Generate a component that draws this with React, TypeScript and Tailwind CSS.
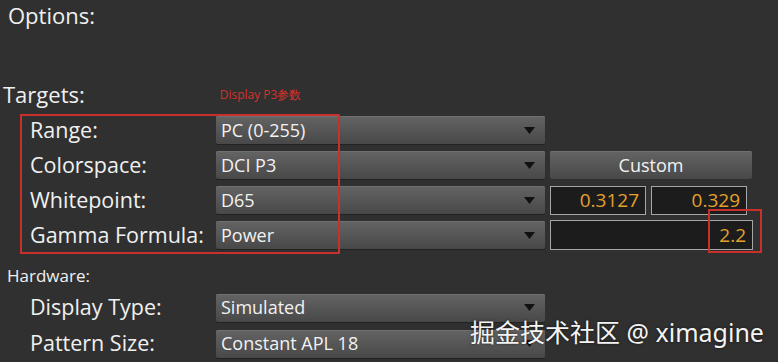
const Arrow = () => (
  <svg width="11" height="7" viewBox="0 0 11 7" aria-hidden="true">
    <polygon points="0,0 11,0 5.5,7" fill="#111" />
  </svg>
);

const Dropdown = ({ value }: { value: string }) => (
  <div className="h-[28px] w-[329px] flex items-center justify-between pl-[5px] pr-[10px] rounded-[2px] bg-gradient-to-b from-[#646464] to-[#484848] shadow-[inset_0_1px_0_#707070,0_1px_0_#222] text-[18px] text-[#f2f2f2]">
    <span>{value}</span>
    <Arrow />
  </div>
);

const NumBox = ({ value, className }: { value: string; className: string }) => (
  <div className={`h-[29px] flex items-center justify-end pr-[6px] bg-[#1c1c1c] border border-[#a6a6a6] text-[19px] text-[#e3a12c] ${className}`}>
    {value}
  </div>
);

const targets = [
  { label: 'Range:', value: 'PC (0-255)' },
  { label: 'Colorspace:', value: 'DCI P3' },
  { label: 'Whitepoint:', value: 'D65' },
  { label: 'Gamma Formula:', value: 'Power' },
];

export default function App() {
  return (
    <div className="relative w-[778px] h-[362px] overflow-hidden bg-[#303030] text-[#f0f0f0] font-['Open_Sans',sans-serif]">
      <div className="pl-[8px] text-[22px] leading-[30px]">Options:</div>

      <div className="mt-[49px] flex items-start">
        <div className="pl-[3px] text-[22px] leading-[30px]">Targets:</div>
        <div className="ml-[135px] mt-[8px] text-[12px] leading-[16px] text-[#d3322c]">Display P3参数</div>
      </div>

      <div className="mt-[7px] flex flex-col gap-[7px]">
        {targets.map((t, i) => (
          <div key={t.label} className="flex items-center h-[28px]">
            <div className="w-[216px] pl-[30px] text-[21.5px] leading-[28px]">{t.label}</div>
            <Dropdown value={t.value} />
            <div className="ml-[5px] flex gap-[5px]">
              {i === 1 && (
                <div className="w-[202px] h-[28px] flex items-center justify-center rounded-[2px] bg-gradient-to-b from-[#646464] to-[#484848] shadow-[inset_0_1px_0_#707070] text-[18px] text-[#f2f2f2]">
                  Custom
                </div>
              )}
              {i === 2 && (
                <>
                  <NumBox value="0.3127" className="w-[96px]" />
                  <NumBox value="0.329" className="w-[96px]" />
                </>
              )}
              {i === 3 && <NumBox value="2.2" className="w-[203px] h-[30px]" />}
            </div>
          </div>
        ))}
      </div>

      <div className="mt-[15px] pl-[7px] text-[17px] leading-[24px]">Hardware:</div>

      <div className="mt-[5px] flex flex-col gap-[7px]">
        <div className="flex items-center h-[29px]">
          <div className="w-[216px] pl-[30px] text-[21.5px]">Display Type:</div>
          <Dropdown value="Simulated" />
        </div>
        <div className="flex items-center h-[29px]">
          <div className="w-[216px] pl-[30px] text-[21.5px]">Pattern Size:</div>
          <Dropdown value="Constant APL 18" />
        </div>
      </div>

      {/* annotation boxes */}
      <div className="absolute left-[20px] top-[114px] w-[320px] h-[140px] border-2 border-[#c8302a]" />
      <div className="absolute left-[708px] top-[209px] w-[54px] h-[44px] border-2 border-[#c8302a]" />

      <div className="absolute left-[470px] top-[315px] text-[25px] leading-[34px] text-[#f4f4f4] [text-shadow:0_0_3px_rgba(0,0,0,0.6)] font-['Noto_Sans','Noto_Sans_CJK_SC',sans-serif]">
        掘金技术社区 @ ximagine
      </div>
    </div>
  );
}
